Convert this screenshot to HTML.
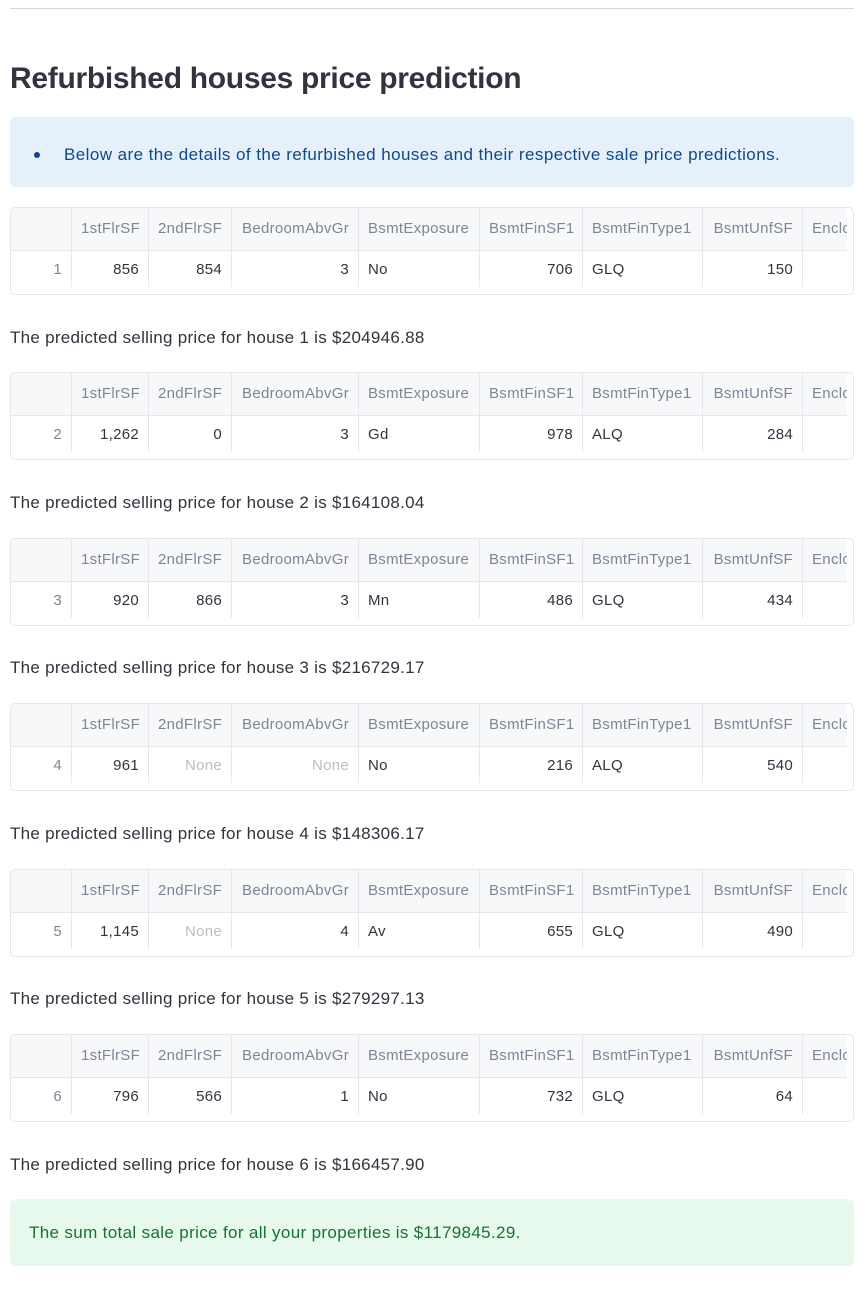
<!DOCTYPE html>
<html><head><meta charset="utf-8"><style>
*{box-sizing:border-box;margin:0;padding:0}
body{width:864px;height:1292px;background:#fff;font-family:"Liberation Sans",sans-serif;color:#31333f;position:relative;overflow:hidden}
.hr{position:absolute;left:10px;right:10px;top:8px;height:1px;background:#d6d6d9}
h1{position:absolute;left:10px;top:62px;font-size:30px;font-weight:bold;letter-spacing:-0.3px;color:#31333f}
.info{position:absolute;left:10px;top:117px;width:844px;height:70px;background:#e6f0fb;border-radius:6px;color:#0d4a8a;font-size:17px}
.info .dot{position:absolute;left:24px;top:35px;width:6px;height:6px;border-radius:50%;background:#0d4a8a}
.info span{position:absolute;left:54px;top:28px;letter-spacing:0.43px}
.tbl{position:absolute;left:10px;width:844px;height:88px;border:1px solid #e6e7ea;border-radius:5px;overflow:hidden;font-size:15px}
.tbl .hd{position:absolute;left:0;top:0;width:836px;height:43px;background:#f7f8fa;border-bottom:1px solid #e6e7ea}
.cell{position:absolute;height:36px;line-height:38px;padding:0 9px;border-right:1px solid #e6e7ea;white-space:nowrap;overflow:hidden;letter-spacing:0.3px}
.hd .cell{height:42px;line-height:42px;color:#808495;letter-spacing:0.3px}
.row{position:absolute;left:0;top:43px;width:836px;height:36px}
.r{text-align:right}
.idx{color:#808495}
.none{color:#bdbdc4}
p.t{position:absolute;left:10px;font-size:17px;color:#31333f;letter-spacing:0.28px}
.succ{position:absolute;left:10px;top:1199px;width:844px;height:67px;background:#e7f8ec;border-radius:6px;color:#177233;font-size:17px}
.succ span{position:absolute;left:19px;top:24px;letter-spacing:0.35px}
</style></head><body>
<div class="hr"></div>
<h1>Refurbished houses price prediction</h1>
<div class="info"><div class="dot"></div><span>Below are the details of the refurbished houses and their respective sale price predictions.</span></div>

<div class="tbl" style="top:207px">
<div class="hd">
<div class="cell" style="left:0;width:61px"></div>
<div class="cell r" style="left:61px;width:77px">1stFlrSF</div>
<div class="cell r" style="left:138px;width:83px">2ndFlrSF</div>
<div class="cell r" style="left:221px;width:127px">BedroomAbvGr</div>
<div class="cell" style="left:348px;width:121px">BsmtExposure</div>
<div class="cell r" style="left:469px;width:103px">BsmtFinSF1</div>
<div class="cell" style="left:572px;width:120px">BsmtFinType1</div>
<div class="cell r" style="left:692px;width:100px">BsmtUnfSF</div>
<div class="cell" style="left:792px;width:44px;border:0">Enclosed</div>
</div>
<div class="row">
<div class="cell r idx" style="left:0;width:61px">1</div>
<div class="cell r" style="left:61px;width:77px">856</div>
<div class="cell r" style="left:138px;width:83px">854</div>
<div class="cell r" style="left:221px;width:127px">3</div>
<div class="cell" style="left:348px;width:121px">No</div>
<div class="cell r" style="left:469px;width:103px">706</div>
<div class="cell" style="left:572px;width:120px">GLQ</div>
<div class="cell r" style="left:692px;width:100px">150</div>
</div></div>
<p class="t" style="top:328px">The predicted selling price for house 1 is $204946.88</p>

<div class="tbl" style="top:372px">
<div class="hd">
<div class="cell" style="left:0;width:61px"></div>
<div class="cell r" style="left:61px;width:77px">1stFlrSF</div>
<div class="cell r" style="left:138px;width:83px">2ndFlrSF</div>
<div class="cell r" style="left:221px;width:127px">BedroomAbvGr</div>
<div class="cell" style="left:348px;width:121px">BsmtExposure</div>
<div class="cell r" style="left:469px;width:103px">BsmtFinSF1</div>
<div class="cell" style="left:572px;width:120px">BsmtFinType1</div>
<div class="cell r" style="left:692px;width:100px">BsmtUnfSF</div>
<div class="cell" style="left:792px;width:44px;border:0">Enclosed</div>
</div>
<div class="row">
<div class="cell r idx" style="left:0;width:61px">2</div>
<div class="cell r" style="left:61px;width:77px">1,262</div>
<div class="cell r" style="left:138px;width:83px">0</div>
<div class="cell r" style="left:221px;width:127px">3</div>
<div class="cell" style="left:348px;width:121px">Gd</div>
<div class="cell r" style="left:469px;width:103px">978</div>
<div class="cell" style="left:572px;width:120px">ALQ</div>
<div class="cell r" style="left:692px;width:100px">284</div>
</div></div>
<p class="t" style="top:493px">The predicted selling price for house 2 is $164108.04</p>

<div class="tbl" style="top:538px">
<div class="hd">
<div class="cell" style="left:0;width:61px"></div>
<div class="cell r" style="left:61px;width:77px">1stFlrSF</div>
<div class="cell r" style="left:138px;width:83px">2ndFlrSF</div>
<div class="cell r" style="left:221px;width:127px">BedroomAbvGr</div>
<div class="cell" style="left:348px;width:121px">BsmtExposure</div>
<div class="cell r" style="left:469px;width:103px">BsmtFinSF1</div>
<div class="cell" style="left:572px;width:120px">BsmtFinType1</div>
<div class="cell r" style="left:692px;width:100px">BsmtUnfSF</div>
<div class="cell" style="left:792px;width:44px;border:0">Enclosed</div>
</div>
<div class="row">
<div class="cell r idx" style="left:0;width:61px">3</div>
<div class="cell r" style="left:61px;width:77px">920</div>
<div class="cell r" style="left:138px;width:83px">866</div>
<div class="cell r" style="left:221px;width:127px">3</div>
<div class="cell" style="left:348px;width:121px">Mn</div>
<div class="cell r" style="left:469px;width:103px">486</div>
<div class="cell" style="left:572px;width:120px">GLQ</div>
<div class="cell r" style="left:692px;width:100px">434</div>
</div></div>
<p class="t" style="top:658px">The predicted selling price for house 3 is $216729.17</p>

<div class="tbl" style="top:703px">
<div class="hd">
<div class="cell" style="left:0;width:61px"></div>
<div class="cell r" style="left:61px;width:77px">1stFlrSF</div>
<div class="cell r" style="left:138px;width:83px">2ndFlrSF</div>
<div class="cell r" style="left:221px;width:127px">BedroomAbvGr</div>
<div class="cell" style="left:348px;width:121px">BsmtExposure</div>
<div class="cell r" style="left:469px;width:103px">BsmtFinSF1</div>
<div class="cell" style="left:572px;width:120px">BsmtFinType1</div>
<div class="cell r" style="left:692px;width:100px">BsmtUnfSF</div>
<div class="cell" style="left:792px;width:44px;border:0">Enclosed</div>
</div>
<div class="row">
<div class="cell r idx" style="left:0;width:61px">4</div>
<div class="cell r" style="left:61px;width:77px">961</div>
<div class="cell r none" style="left:138px;width:83px">None</div>
<div class="cell r none" style="left:221px;width:127px">None</div>
<div class="cell" style="left:348px;width:121px">No</div>
<div class="cell r" style="left:469px;width:103px">216</div>
<div class="cell" style="left:572px;width:120px">ALQ</div>
<div class="cell r" style="left:692px;width:100px">540</div>
</div></div>
<p class="t" style="top:824px">The predicted selling price for house 4 is $148306.17</p>

<div class="tbl" style="top:869px">
<div class="hd">
<div class="cell" style="left:0;width:61px"></div>
<div class="cell r" style="left:61px;width:77px">1stFlrSF</div>
<div class="cell r" style="left:138px;width:83px">2ndFlrSF</div>
<div class="cell r" style="left:221px;width:127px">BedroomAbvGr</div>
<div class="cell" style="left:348px;width:121px">BsmtExposure</div>
<div class="cell r" style="left:469px;width:103px">BsmtFinSF1</div>
<div class="cell" style="left:572px;width:120px">BsmtFinType1</div>
<div class="cell r" style="left:692px;width:100px">BsmtUnfSF</div>
<div class="cell" style="left:792px;width:44px;border:0">Enclosed</div>
</div>
<div class="row">
<div class="cell r idx" style="left:0;width:61px">5</div>
<div class="cell r" style="left:61px;width:77px">1,145</div>
<div class="cell r none" style="left:138px;width:83px">None</div>
<div class="cell r" style="left:221px;width:127px">4</div>
<div class="cell" style="left:348px;width:121px">Av</div>
<div class="cell r" style="left:469px;width:103px">655</div>
<div class="cell" style="left:572px;width:120px">GLQ</div>
<div class="cell r" style="left:692px;width:100px">490</div>
</div></div>
<p class="t" style="top:989px">The predicted selling price for house 5 is $279297.13</p>

<div class="tbl" style="top:1034px">
<div class="hd">
<div class="cell" style="left:0;width:61px"></div>
<div class="cell r" style="left:61px;width:77px">1stFlrSF</div>
<div class="cell r" style="left:138px;width:83px">2ndFlrSF</div>
<div class="cell r" style="left:221px;width:127px">BedroomAbvGr</div>
<div class="cell" style="left:348px;width:121px">BsmtExposure</div>
<div class="cell r" style="left:469px;width:103px">BsmtFinSF1</div>
<div class="cell" style="left:572px;width:120px">BsmtFinType1</div>
<div class="cell r" style="left:692px;width:100px">BsmtUnfSF</div>
<div class="cell" style="left:792px;width:44px;border:0">Enclosed</div>
</div>
<div class="row">
<div class="cell r idx" style="left:0;width:61px">6</div>
<div class="cell r" style="left:61px;width:77px">796</div>
<div class="cell r" style="left:138px;width:83px">566</div>
<div class="cell r" style="left:221px;width:127px">1</div>
<div class="cell" style="left:348px;width:121px">No</div>
<div class="cell r" style="left:469px;width:103px">732</div>
<div class="cell" style="left:572px;width:120px">GLQ</div>
<div class="cell r" style="left:692px;width:100px">64</div>
</div></div>
<p class="t" style="top:1155px">The predicted selling price for house 6 is $166457.90</p>

<div class="succ"><span>The sum total sale price for all your properties is $1179845.29.</span></div>
</body></html>
